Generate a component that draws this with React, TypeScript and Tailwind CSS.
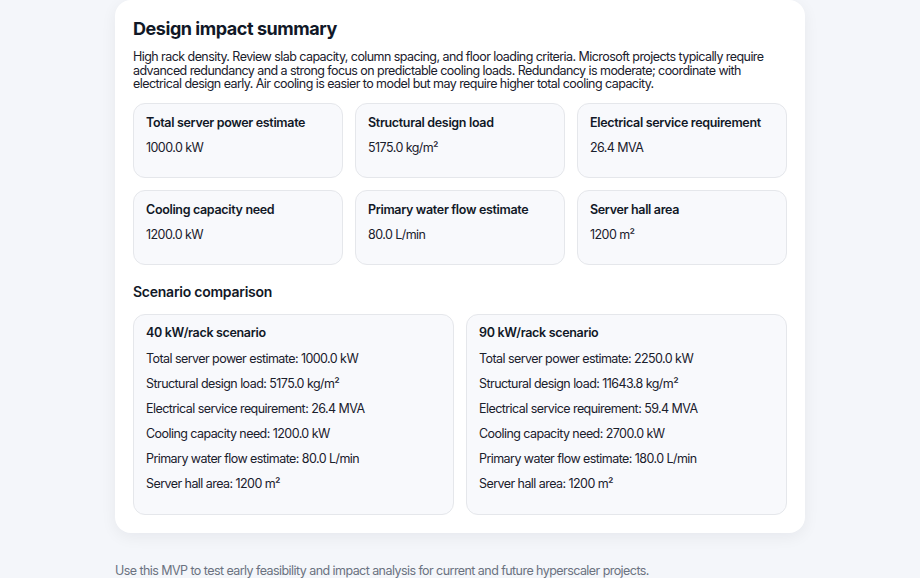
import React from "react";

const metrics = [
  { label: "Total server power estimate", value: "1000.0 kW" },
  { label: "Structural design load", value: "5175.0 kg/m²" },
  { label: "Electrical service requirement", value: "26.4 MVA" },
  { label: "Cooling capacity need", value: "1200.0 kW" },
  { label: "Primary water flow estimate", value: "80.0 L/min" },
  { label: "Server hall area", value: "1200 m²" },
];

const scenarios = [
  {
    title: "40 kW/rack scenario",
    rows: [
      "Total server power estimate: 1000.0 kW",
      "Structural design load: 5175.0 kg/m²",
      "Electrical service requirement: 26.4 MVA",
      "Cooling capacity need: 1200.0 kW",
      "Primary water flow estimate: 80.0 L/min",
      "Server hall area: 1200 m²",
    ],
  },
  {
    title: "90 kW/rack scenario",
    rows: [
      "Total server power estimate: 2250.0 kW",
      "Structural design load: 11643.8 kg/m²",
      "Electrical service requirement: 59.4 MVA",
      "Cooling capacity need: 2700.0 kW",
      "Primary water flow estimate: 180.0 L/min",
      "Server hall area: 1200 m²",
    ],
  },
];

export default function App() {
  return (
    <div
      className="min-h-[578px] w-full bg-[#f4f6fa] text-[#111827]"
      style={{ fontFamily: "Inter, 'Noto Sans', sans-serif" }}
    >
      <div className="mx-auto w-[690px]">
        <section className="rounded-2xl bg-white px-[18px] pb-[18px] pt-[16px] shadow-[0_4px_16px_rgba(15,23,42,0.06)]">
          <h2 className="text-[18px] font-bold leading-[26px] tracking-[-0.45px] text-[#111827]">
            Design impact summary
          </h2>
          <p className="mt-[8px] text-[12.5px] leading-[13.5px] tracking-[-0.56px] text-[#1a202c]">
            High rack density. Review slab capacity, column spacing, and floor loading criteria. Microsoft projects
            typically require advanced redundancy and a strong focus on predictable cooling loads. Redundancy is
            moderate; coordinate with electrical design early. Air cooling is easier to model but may require higher
            total cooling capacity.
          </p>

          <div className="mt-[12px] grid grid-cols-3 gap-x-[12px] gap-y-[12px]">
            {metrics.map((m) => (
              <div
                key={m.label}
                className="h-[75px] rounded-xl border border-[#e5e7eb] bg-[#f8f9fc] px-[12px] pt-[11px]"
              >
                <div className="text-[12.5px] font-semibold leading-[16px] tracking-[-0.33px] text-[#111827]">
                  {m.label}
                </div>
                <div className="mt-[9px] text-[12.5px] leading-[16px] tracking-[-0.56px] text-[#1a202c]">
                  {m.value}
                </div>
              </div>
            ))}
          </div>

          <h3 className="mt-[17px] text-[14px] font-semibold leading-[20px] tracking-[-0.25px] text-[#111827]">
            Scenario comparison
          </h3>

          <div className="mt-[12px] grid grid-cols-2 gap-[12px]">
            {scenarios.map((s) => (
              <div
                key={s.title}
                className="h-[201px] rounded-xl border border-[#e5e7eb] bg-[#f8f9fc] px-[12px] pt-[10px]"
              >
                <div className="text-[12.5px] font-semibold leading-[16px] tracking-[-0.33px] text-[#111827]">
                  {s.title}
                </div>
                <div className="mt-[10px] flex flex-col gap-[9px]">
                  {s.rows.map((r) => (
                    <div key={r} className="text-[12.5px] leading-[16px] tracking-[-0.56px] text-[#1a202c]">
                      {r}
                    </div>
                  ))}
                </div>
              </div>
            ))}
          </div>
        </section>

        <p className="mt-[30px] text-[12.5px] leading-[16px] tracking-[-0.56px] text-[#6b7280]">
          Use this MVP to test early feasibility and impact analysis for current and future hyperscaler projects.
        </p>
      </div>
    </div>
  );
}
